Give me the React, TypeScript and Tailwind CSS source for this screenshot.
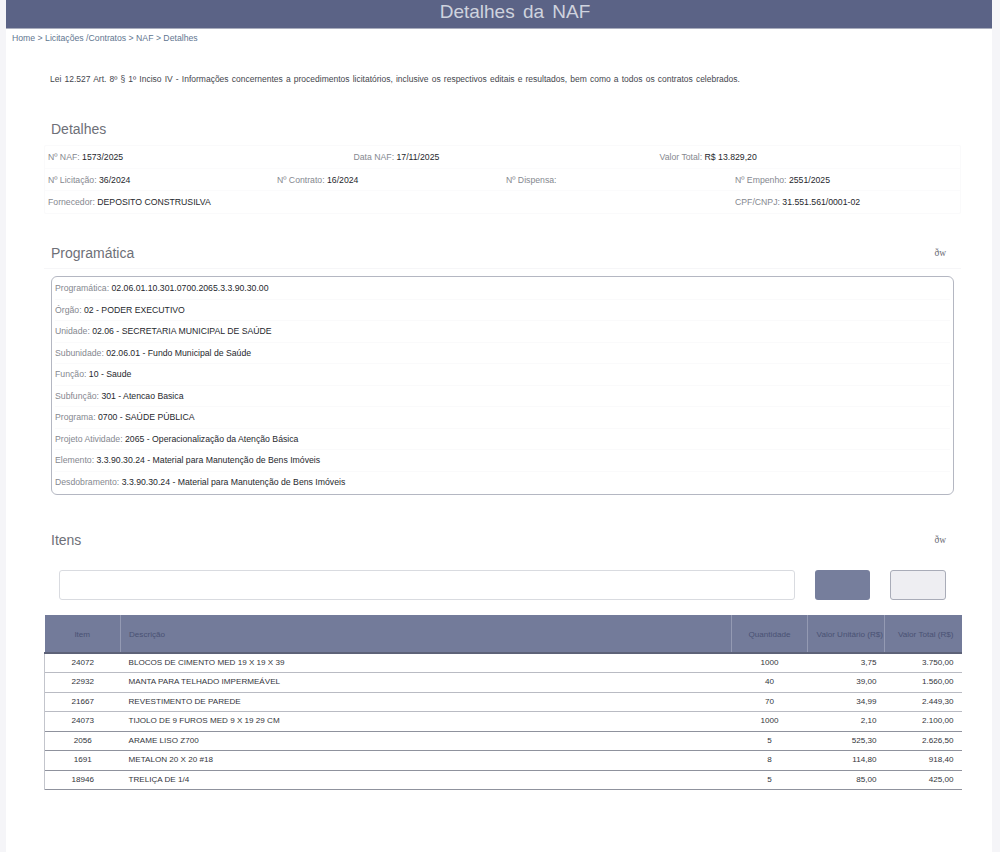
const programatica = [
  ['Programática', '02.06.01.10.301.0700.2065.3.3.90.30.00'],
  ['Órgão', '02 - PODER EXECUTIVO'],
  ['Unidade', '02.06 - SECRETARIA MUNICIPAL DE SAÚDE'],
  ['Subunidade', '02.06.01 - Fundo Municipal de Saúde'],
  ['Função', '10 - Saude'],
  ['Subfunção', '301 - Atencao Basica'],
  ['Programa', '0700 - SAÚDE PÚBLICA'],
  ['Projeto Atividade', '2065 - Operacionalização da Atenção Básica'],
  ['Elemento', '3.3.90.30.24 - Material para Manutenção de Bens Imóveis'],
  ['Desdobramento', '3.3.90.30.24 - Material para Manutenção de Bens Imóveis'],
]

const itens = [
  ['24072', 'BLOCOS DE CIMENTO MED 19 X 19 X 39', '1000', '3,75', '3.750,00'],
  ['22932', 'MANTA PARA TELHADO IMPERMEÁVEL', '40', '39,00', '1.560,00'],
  ['21667', 'REVESTIMENTO DE PAREDE', '70', '34,99', '2.449,30'],
  ['24073', 'TIJOLO DE 9 FUROS MED 9 X 19 29 CM', '1000', '2,10', '2.100,00'],
  ['2056', 'ARAME LISO Z700', '5', '525,30', '2.626,50'],
  ['1691', 'METALON 20 X 20 #18', '8', '114,80', '918,40'],
  ['18946', 'TRELIÇA DE 1/4', '5', '85,00', '425,00'],
]

function Campo({ label, valor }: { label: string; valor: string }) {
  return (
    <span className="text-[8.7px] leading-[12px] text-[#85888f] whitespace-nowrap">
      {label}: <span className="text-[#26282d]">{valor}</span>
    </span>
  )
}

function Titulo({ texto, extra }: { texto: string; extra?: boolean }) {
  return (
    <div className="flex items-center justify-between pl-[7px] pr-[15px]">
      <h2 className="text-[14px] leading-[20px] text-[#6e7078]">{texto}</h2>
      {extra && <span className="font-['Liberation_Serif',serif] text-[9.5px] text-[#6a6c74]">ðw</span>}
    </div>
  )
}

export default function App() {
  return (
    <div className="min-h-[852px] bg-[#f5f5f8] font-['Liberation_Sans',Arial,sans-serif]">
      <div className="ml-[6px] w-[986px] min-h-[852px] bg-white">
        <header className="h-[29px] bg-[#5b6386] border-b border-[#a9adbd] flex items-center justify-center">
          <h1 className="ml-[32px] -mt-[5px] text-[19px] leading-[24px] text-[#cfd3de] [word-spacing:3px]">Detalhes da NAF</h1>
        </header>

        <nav className="pl-[6px] pt-[3px] text-[8.7px] leading-[12px] text-[#5f7690] whitespace-nowrap">
          Home &gt; Licitações /Contratos &gt; NAF &gt; Detalhes
        </nav>

        <p className="mt-[29px] ml-[44px] text-[8.5px] leading-[12px] text-[#44464d] [word-spacing:0.78px] whitespace-nowrap">
          Lei 12.527 Art. 8º § 1º Inciso IV - Informações concernentes a procedimentos licitatórios, inclusive os respectivos editais e resultados, bem como a todos os contratos celebrados.
        </p>

        <section className="mt-[34px] ml-[38px] w-[917px]">
          <Titulo texto="Detalhes" />
          <div className="mt-[6px] border border-[#fafafb] rounded-[2px]">
            <div className="grid grid-cols-[305.5px_306px_1fr] h-[23px] items-center pl-[3px] border-b border-[#fbfbfc]">
              <Campo label="Nº NAF" valor="1573/2025" />
              <Campo label="Data NAF" valor="17/11/2025" />
              <Campo label="Valor Total" valor="R$ 13.829,20" />
            </div>
            <div className="grid grid-cols-[229px_229px_229px_1fr] h-[22px] items-center pl-[3px] border-b border-[#fbfbfc]">
              <Campo label="Nº Licitação" valor="36/2024" />
              <Campo label="Nº Contrato" valor="16/2024" />
              <Campo label="Nº Dispensa" valor="" />
              <Campo label="Nº Empenho" valor="2551/2025" />
            </div>
            <div className="grid grid-cols-[687px_1fr] h-[22px] items-center pl-[3px]">
              <Campo label="Fornecedor" valor="DEPOSITO CONSTRUSILVA" />
              <Campo label="CPF/CNPJ" valor="31.551.561/0001-02" />
            </div>
          </div>
        </section>

        <section className="mt-[29px] ml-[38px] w-[917px]">
          <div className="border-b border-[#f6f6f8] pb-[5px]">
            <Titulo texto="Programática" extra />
          </div>
          <div className="mt-[7px] ml-[7px] w-[903px] border border-[#b4b7c2] rounded-[6px] px-[3px] py-[1px]">
            {programatica.map(([label, valor], i) => (
              <div key={label} className={`h-[21.5px] flex items-center ${i < 9 ? 'border-b border-[#fafafb]' : ''}`}>
                <Campo label={label} valor={valor} />
              </div>
            ))}
          </div>
        </section>

        <section className="mt-[35px] ml-[38px] w-[917px]">
          <Titulo texto="Itens" extra />
          <div className="mt-[20px] flex pl-[15px] gap-[20px]">
            <div className="w-[736px] h-[30px] bg-white border border-[#d9dbe0] rounded-[3px]" />
            <button className="w-[55px] h-[30px] bg-[#767e9c] rounded-[3px]" />
            <button className="w-[56px] h-[30px] bg-[#eeeef2] border border-[#a9acb8] rounded-[3px]" />
          </div>

          <table className="mt-[15px] w-[917px] table-fixed border-collapse border-b border-[#6e7180] text-[8.1px]">
            <thead>
              <tr className="h-[38px] bg-[#737b9a] text-[#4a5274] border-b-2 border-[#5d6278]">
                <th className="w-[76px] pt-[3px] font-normal text-center">Item</th>
                <th className="w-[611px] pt-[3px] font-normal text-left pl-[8px] border-l border-[#949ab3]">Descrição</th>
                <th className="w-[76px] pt-[3px] font-normal text-center border-l border-[#949ab3]">Quantidade</th>
                <th className="w-[77px] pt-[3px] font-normal text-right pr-[1px] border-l border-[#949ab3] whitespace-nowrap">Valor Unitário (R$)</th>
                <th className="w-[77px] pt-[3px] font-normal text-right pr-[8px] border-l border-[#949ab3] whitespace-nowrap">Valor Total (R$)</th>
              </tr>
            </thead>
            <tbody className="text-[#33353b]">
              {itens.map((item, i) => (
                <tr key={item[0]} className={`h-[19.5px] border-b ${i < 3 ? 'border-[#b9bbc3]' : 'border-[#8f929d]'}`}>
                  <td className="text-center border-l border-[#c3c5cc]">{item[0]}</td>
                  <td className="pl-[8px]">{item[1]}</td>
                  <td className="text-center">{item[2]}</td>
                  <td className="text-right pr-[8px]">{item[3]}</td>
                  <td className="text-right pr-[8px]">{item[4]}</td>
                </tr>
              ))}
            </tbody>
          </table>
        </section>
      </div>
    </div>
  )
}
